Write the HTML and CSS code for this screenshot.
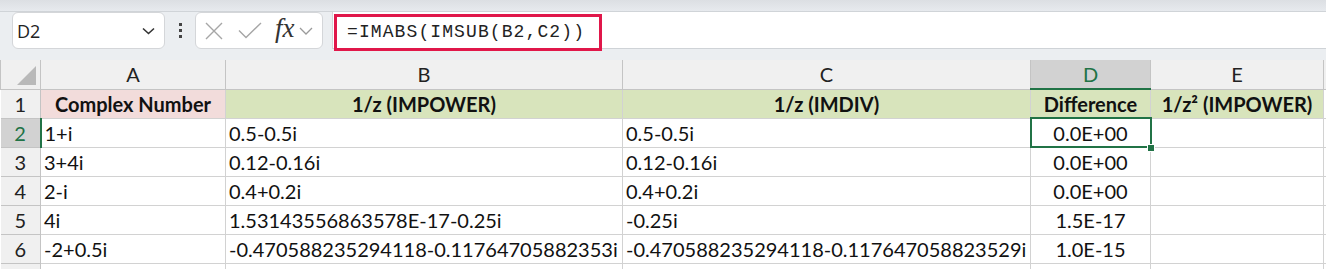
FILE: index.html
```html
<!DOCTYPE html>
<html lang="en">
<head>
    <meta charset="UTF-8">
    <title>IMABS difference sheet</title>
    <link rel="stylesheet" href="styles.css">
</head>
<body>
    <div class="ribbon-edge"></div>

    <div class="formula-bar">
        <div class="name-box">
            <span>D2</span>
            <svg class="chevron" width="13" height="8" viewBox="0 0 13 8"><path d="M1 1.5l5.5 5 5.5-5" fill="none" stroke="#333" stroke-width="1.6"/></svg>
        </div>
        <div class="dots">
            <i></i><i></i><i></i>
        </div>
        <div class="fx-box">
            <svg width="18" height="18" viewBox="0 0 18 18"><path d="M1 1l16 16M17 1L1 17" stroke="#a6a6a6" stroke-width="1.4"/></svg>
            <svg width="24" height="17" viewBox="0 0 24 17"><path d="M1 8.5l7 7L23 1" fill="none" stroke="#a6a6a6" stroke-width="1.4"/></svg>
            <span class="fx">fx</span>
            <svg width="14" height="8" viewBox="0 0 14 8"><path d="M1 1l6 6 6-6" fill="none" stroke="#9a9a9a" stroke-width="1.3"/></svg>
        </div>
        <div class="formula-input">
            <span class="formula-text">=IMABS(IMSUB(B2,C2))</span>
        </div>
    </div>

    <table class="sheet">
        <colgroup>
            <col class="w-row">
            <col class="w-a">
            <col class="w-b">
            <col class="w-c">
            <col class="w-d">
            <col class="w-e">
            <col class="w-f">
        </colgroup>
        <tr class="col-heads">
            <th class="corner"><span class="tri"></span></th>
            <th>A</th>
            <th>B</th>
            <th>C</th>
            <th class="active-col">D</th>
            <th>E</th>
            <th></th>
        </tr>
        <tr>
            <th class="row-head">1</th>
            <td class="title pink">Complex Number</td>
            <td class="title green">1/z (IMPOWER)</td>
            <td class="title green">1/z (IMDIV)</td>
            <td class="title green">Difference</td>
            <td class="title green">1/z² (IMPOWER)</td>
            <td></td>
        </tr>
        <tr>
            <th class="row-head active-row">2</th>
            <td>1+i</td>
            <td>0.5-0.5i</td>
            <td>0.5-0.5i</td>
            <td class="num selected">0.0E+00<span class="handle"></span></td>
            <td></td>
            <td></td>
        </tr>
        <tr>
            <th class="row-head">3</th>
            <td>3+4i</td>
            <td>0.12-0.16i</td>
            <td>0.12-0.16i</td>
            <td class="num">0.0E+00</td>
            <td></td>
            <td></td>
        </tr>
        <tr>
            <th class="row-head">4</th>
            <td>2-i</td>
            <td>0.4+0.2i</td>
            <td>0.4+0.2i</td>
            <td class="num">0.0E+00</td>
            <td></td>
            <td></td>
        </tr>
        <tr>
            <th class="row-head">5</th>
            <td>4i</td>
            <td>1.53143556863578E-17-0.25i</td>
            <td>-0.25i</td>
            <td class="num">1.5E-17</td>
            <td></td>
            <td></td>
        </tr>
        <tr>
            <th class="row-head">6</th>
            <td>-2+0.5i</td>
            <td>-0.470588235294118-0.11764705882353i</td>
            <td>-0.470588235294118-0.117647058823529i</td>
            <td class="num">1.0E-15</td>
            <td></td>
            <td></td>
        </tr>
        <tr>
            <th class="row-head"></th>
            <td></td>
            <td></td>
            <td></td>
            <td></td>
            <td></td>
            <td></td>
        </tr>
    </table>
</body>
</html>
```

FILE: styles.css
```css
* {
    box-sizing: border-box;
    margin: 0;
    padding: 0;
}

body {
    width: 1326px;
    height: 269px;
    overflow: hidden;
    background: #ffffff;
    font-family: 'Lato', 'Liberation Sans', sans-serif;
    color: #111;
}

/* Formula bar */
.ribbon-edge {
    height: 12px;
    background: linear-gradient(#dcdfe3, #e7eaee);
    border-bottom: 1px solid #d0d4d8;
}

.formula-bar {
    height: 48px;
    background: #ebeef1;
    display: flex;
    align-items: flex-start;
    padding-left: 12px;
}

.name-box {
    width: 153px;
    height: 37px;
    background: #fff;
    border: 1px solid #d4d6d9;
    border-radius: 6px;
    display: flex;
    align-items: center;
    justify-content: space-between;
    padding: 0 9px 0 4px;
    font-family: 'Open Sans', 'Liberation Sans', sans-serif;
    font-size: 18px;
    color: #222;
}

.dots {
    width: 30px;
    height: 37px;
    display: flex;
    flex-direction: column;
    align-items: center;
    justify-content: center;
    gap: 3px;
}

.dots i {
    width: 3px;
    height: 3px;
    background: #444;
}

.fx-box {
    width: 128px;
    height: 37px;
    background: #fff;
    border: 1px solid #d4d6d9;
    border-radius: 6px;
    display: flex;
    align-items: center;
    padding-left: 9px;
}

.fx-box svg:nth-child(1) { margin-right: 15px; }
.fx-box svg:nth-child(2) { margin-right: 13px; }

.fx {
    font-family: 'Liberation Serif', serif;
    font-style: italic;
    font-size: 27px;
    color: #333;
    margin-right: 4px;
    line-height: 1;
    margin-top: -4px;
}

.formula-input {
    flex: 1;
    height: 37px;
    margin-left: 9px;
    background: #fff;
    border-left: 1px solid #d4d6d9;
    border-bottom: 1px solid #cfd3d7;
    padding-left: 1px;
    padding-top: 2px;
}

.formula-text {
    display: inline-block;
    height: 37px;
    width: 268px;
    border: 3px solid #e0174a;
    font-family: 'Liberation Mono', monospace;
    font-size: 18px;
    letter-spacing: 1.1px;
    color: #222;
    padding: 5px 0 0 10px;
}

/* Sheet grid */
.sheet {
    border-collapse: collapse;
    table-layout: fixed;
    width: 1356px;
    font-size: 20px;
}

.w-row { width: 40px; }
.w-a { width: 185px; }
.w-b { width: 397px; }
.w-c { width: 408px; }
.w-d { width: 120px; }
.w-e { width: 173px; }
.w-f { width: 33px; }

.sheet tr {
    height: 29px;
}

.sheet td {
    border: 1px solid #d2d2d2;
    padding: 0 3px;
    white-space: nowrap;
    overflow: hidden;
    vertical-align: middle;
    color: #111;
}

.sheet th {
    background: #f0f0f0;
    border: 1px solid #c4c4c4;
    font-weight: normal;
    color: #222;
    vertical-align: middle;
}

.col-heads th {
    border-top: none;
}

.corner {
    position: relative;
    border-left: none;
}

.tri {
    position: absolute;
    right: 4px;
    bottom: 4px;
    width: 0;
    height: 0;
    border-left: 19px solid transparent;
    border-bottom: 19px solid #b9b9b9;
}

.active-col {
    background: #d2d2d2 !important;
    color: #217346 !important;
    border-bottom: 2px solid #217346 !important;
}

.row-head {
    border-left: none !important;
}

.active-row {
    background: #d2d2d2 !important;
    color: #217346 !important;
    border-right: 2px solid #217346 !important;
}

.title {
    font-weight: bold;
    text-align: center;
    color: #000;
}

.pink { background: #f2dcdb; }
.green { background: #d8e4bc; }

.num {
    text-align: center;
}

.selected {
    position: relative;
    outline: 2px solid #217346;
    outline-offset: -1px;
    overflow: visible !important;
}

.handle {
    position: absolute;
    right: -5px;
    bottom: -5px;
    width: 8px;
    height: 8px;
    background: #217346;
    border: 1px solid #fff;
}
```
